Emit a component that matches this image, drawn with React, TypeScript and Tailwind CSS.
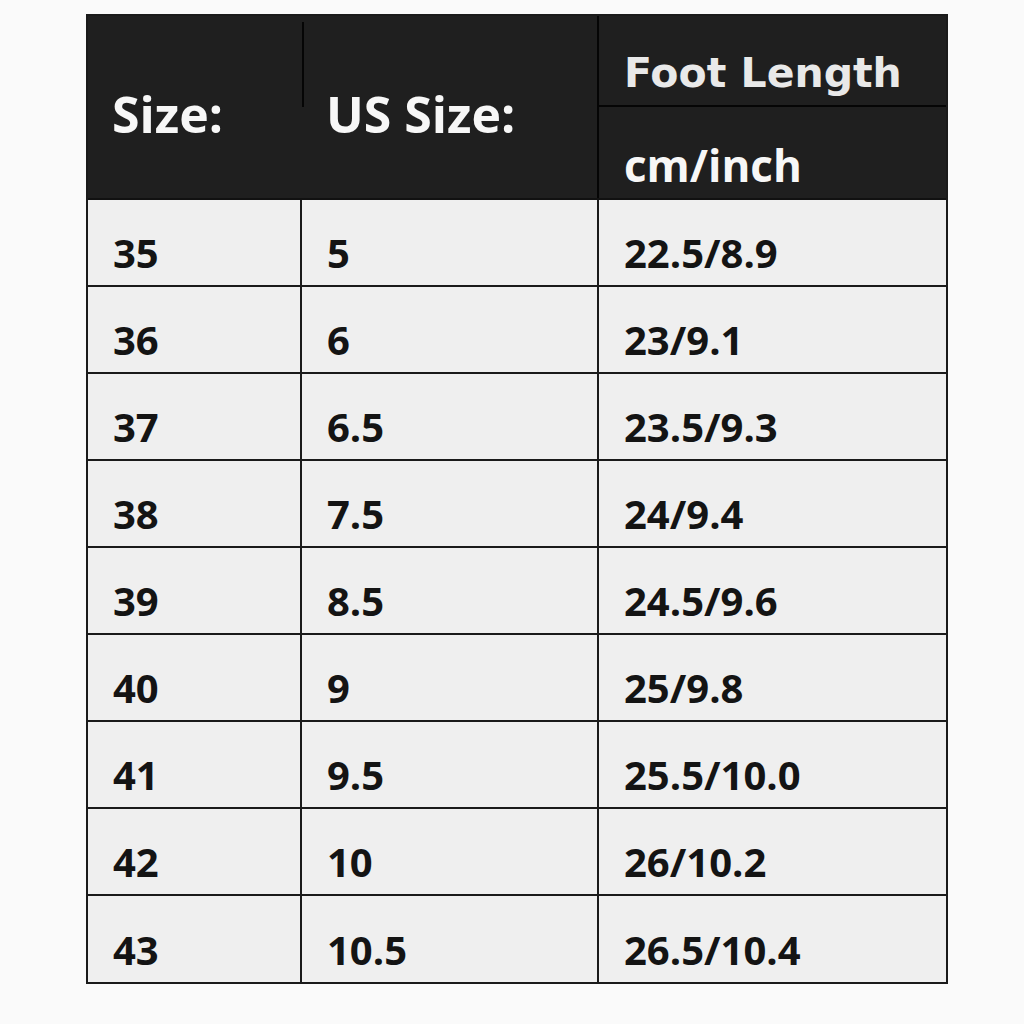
const rows = [
  ['35', '5', '22.5/8.9'],
  ['36', '6', '23/9.1'],
  ['37', '6.5', '23.5/9.3'],
  ['38', '7.5', '24/9.4'],
  ['39', '8.5', '24.5/9.6'],
  ['40', '9', '25/9.8'],
  ['41', '9.5', '25.5/10.0'],
  ['42', '10', '26/10.2'],
  ['43', '10.5', '26.5/10.4'],
]

const openSans = { fontFamily: '"Open Sans", "Noto Sans", sans-serif' }
const dejavu = { fontFamily: '"DejaVu Sans", sans-serif' }

export default function App() {
  return (
    <div className="min-h-screen bg-[#fafafa] pt-[14px] pl-[86px]">
      <div className="w-[862px] border-2 border-[#1a1a1a]">
        <div className="grid h-[184px] grid-cols-[214px_297px_1fr] border-b-2 border-[#111] bg-[#1f1f1f]">
          <div className="relative flex items-center pt-[14px] pl-[24px]">
            <span className="absolute right-[-2px] top-[6px] h-[85px] w-[2px] bg-[#050505]" />
            <span style={openSans} className="text-[50px] leading-none font-bold text-[#f7f7f7]">
              Size:
            </span>
          </div>
          <div className="flex items-center border-r-2 border-[#050505] pt-[14px] pl-[24px]">
            <span style={openSans} className="text-[50px] leading-none font-bold text-[#f7f7f7]">
              US Size:
            </span>
          </div>
          <div className="flex flex-col">
            <div className="flex h-[91px] items-end border-b-2 border-[#050505] pb-[11px] pl-[25px]">
              <span style={dejavu} className="text-[41px] leading-none font-bold text-[#e9e9e9]">
                Foot Length
              </span>
            </div>
            <div className="flex flex-1 items-end pb-[11px] pl-[25px]">
              <span style={openSans} className="text-[44px] leading-none font-bold text-[#f7f7f7]">
                cm/inch
              </span>
            </div>
          </div>
        </div>
        {rows.map((r, i) => (
          <div
            key={r[0]}
            className={
              i < rows.length - 1
                ? 'grid h-[87px] grid-cols-[214px_297px_1fr] border-b-2 border-[#1a1a1a] bg-[#efefef]'
                : 'grid h-[86px] grid-cols-[214px_297px_1fr] bg-[#efefef]'
            }
          >
            {r.map((v, j) => (
              <div
                key={j}
                className={
                  j < 2
                    ? 'flex items-end border-r-2 border-[#1a1a1a] pb-[12px] pl-[25px]'
                    : 'flex items-end pb-[12px] pl-[25px]'
                }
              >
                <span style={openSans} className="text-[40px] leading-none font-bold text-[#141414]">
                  {v}
                </span>
              </div>
            ))}
          </div>
        ))}
      </div>
    </div>
  )
}
